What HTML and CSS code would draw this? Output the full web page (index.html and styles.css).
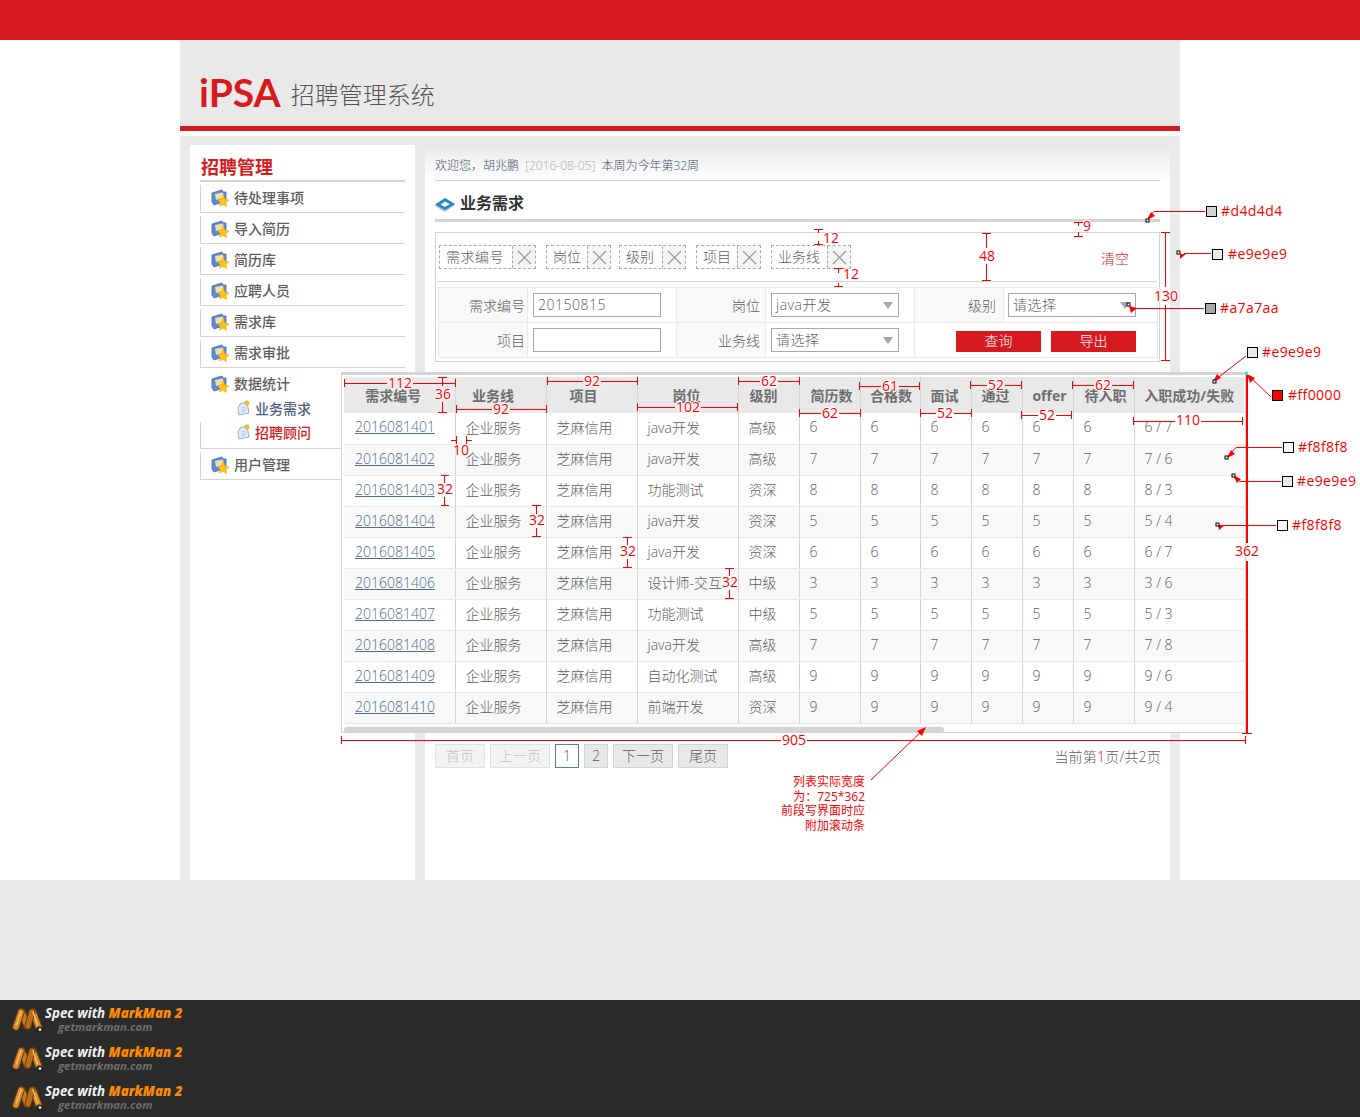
FILE: index.html
```html
<!DOCTYPE html>
<html>
<head>
    <title>iPSA 招聘管理系统</title>
    <link rel="stylesheet" href="styles.css">
</head>
<body>
    <svg class="icon-defs" width="0" height="0">
        <symbol id="ico-folder" viewBox="0 0 18 18">
            <path d="M1 4 L11 1 L12 3 L15 3 L15 12 L3 16 L1 13 Z" fill="#5c8ad6" stroke="#3f68b4" stroke-width=".8"/>
            <path d="M4 5 L12 3.500 L13 9 L5 11 Z" fill="#f2dfa6"/>
            <path d="M12 6 L14 10 L18 11 L15 13.500 L15.500 17.500 L12 15.500 L8.500 17 L9 13 L6.500 10.500 L10.500 10 Z" fill="#fcc419" stroke="#eda80c" stroke-width=".5"/>
        </symbol>
        <symbol id="ico-doc" viewBox="0 0 14 16">
            <path d="M3 4 L10 2 L12 13 L2 15 L1 8 Z" fill="#e6eef8" stroke="#93aed2"/>
            <path d="M4 8 L9 7 M4 10 L10 9 M4 12 L9 11" stroke="#a9c0dc" stroke-width=".8"/>
            <circle cx="10" cy="3" r="2.200" fill="#f4c21c" stroke="#d89a10" stroke-width=".5"/>
        </symbol>
        <symbol id="ico-book" viewBox="0 0 20 14">
            <path d="M0 8 L10 2 L20 7 L10 14 Z" fill="#b9bec4"/>
            <path d="M0 6.500 L10 0 L20 6 L10 12 Z" fill="#1f87c4"/>
            <path d="M5.500 6.500 L10 3.500 L15 6 L10 9 Z" fill="#fff"/>
        </symbol>
        <symbol id="ico-mark" viewBox="0 0 32 26">
            <g fill="none" stroke-linecap="round">
                <path d="M10 4 L15 18" stroke="#6d3d0c" stroke-width="7.500"/>
                <path d="M10 4 L15 18" stroke="#c67a20" stroke-width="5.500"/>
                <path d="M21 4 L27 20" stroke="#6d3d0c" stroke-width="7.500"/>
                <path d="M21 4 L27 20" stroke="#d98b2a" stroke-width="5.500"/>
                <path d="M16 18 L20 4" stroke="#6d3d0c" stroke-width="7"/>
                <path d="M16 18 L20 4" stroke="#b96d18" stroke-width="5"/>
                <path d="M4 19 L9 4" stroke="#6d3d0c" stroke-width="7.500"/>
                <path d="M4 19 L9 4" stroke="#d98b2a" stroke-width="5.500"/>
                <path d="M9 4 L4 18 M21 4 L26 18" stroke="#f3c27a" stroke-width="1.500" stroke-dasharray="1.500 1.500"/>
            </g>
            <circle cx="27.500" cy="22" r="3.600" fill="#222"/>
            <circle cx="28" cy="21.600" r="1.400" fill="#eee"/>
        </symbol>
        <symbol id="ico-x" viewBox="0 0 15 15">
            <path d="M1 1 L14 14 M14 1 L1 14" fill="none" stroke="#999" stroke-width="1.200"/>
        </symbol>
    </svg>

    <div class="topbar"></div>

    <div class="wrap">
        <div class="header">
            <span class="logo">iPSA</span>
            <span class="logo-sub">招聘管理系统</span>
        </div>

        <div class="content">
            <div class="sidebar">
                <h2 class="side-title">招聘管理</h2>
                <ul class="side-menu">
                    <li class="side-item"><svg class="ico"><use href="#ico-folder"/></svg>待处理事项</li>
                    <li class="side-item"><svg class="ico"><use href="#ico-folder"/></svg>导入简历</li>
                    <li class="side-item"><svg class="ico"><use href="#ico-folder"/></svg>简历库</li>
                    <li class="side-item"><svg class="ico"><use href="#ico-folder"/></svg>应聘人员</li>
                    <li class="side-item"><svg class="ico"><use href="#ico-folder"/></svg>需求库</li>
                    <li class="side-item"><svg class="ico"><use href="#ico-folder"/></svg>需求审批</li>
                    <li class="side-item side-open"><svg class="ico"><use href="#ico-folder"/></svg>数据统计</li>
                    <li class="side-sub"><svg class="ico-sm"><use href="#ico-doc"/></svg>业务需求</li>
                    <li class="side-sub side-sub-on"><svg class="ico-sm"><use href="#ico-doc"/></svg>招聘顾问</li>
                    <li class="side-item"><svg class="ico"><use href="#ico-folder"/></svg>用户管理</li>
                </ul>
            </div>

            <div class="main">
                <div class="welcome">欢迎您，胡兆鹏 <span class="welcome-date">[2016-08-05]</span> 本周为今年第32周</div>
                <div class="page-title"><svg class="ico-book"><use href="#ico-book"/></svg>业务需求</div>

                <div class="filter">
                    <div class="chips">
                        <span class="chip"><span class="chip-text">需求编号</span><span class="chip-x"><svg class="x"><use href="#ico-x"/></svg></span></span>
                        <span class="chip"><span class="chip-text">岗位</span><span class="chip-x"><svg class="x"><use href="#ico-x"/></svg></span></span>
                        <span class="chip"><span class="chip-text">级别</span><span class="chip-x"><svg class="x"><use href="#ico-x"/></svg></span></span>
                        <span class="chip"><span class="chip-text">项目</span><span class="chip-x"><svg class="x"><use href="#ico-x"/></svg></span></span>
                        <span class="chip"><span class="chip-text">业务线</span><span class="chip-x"><svg class="x"><use href="#ico-x"/></svg></span></span>
                        <span class="chips-clear">清空</span>
                    </div>
                    <table class="form-table">
                        <tr>
                            <td class="f-label f-l1">需求编号</td>
                            <td class="f-field f-c1"><span class="f-input">20150815</span></td>
                            <td class="f-label f-l2">岗位</td>
                            <td class="f-field f-c2"><span class="f-input f-select">java开发</span></td>
                            <td class="f-label f-l3">级别</td>
                            <td class="f-field f-c3"><span class="f-input f-select">请选择</span></td>
                        </tr>
                        <tr>
                            <td class="f-label">项目</td>
                            <td class="f-field"><span class="f-input"></span></td>
                            <td class="f-label f-l2">业务线</td>
                            <td class="f-field"><span class="f-input f-select">请选择</span></td>
                            <td class="f-actions" colspan="2">
                                <div class="f-btns"><span class="btn">查询</span><span class="btn">导出</span></div>
                            </td>
                        </tr>
                    </table>
                </div>

                <div class="list-panel">
                    <table class="list">
                        <colgroup>
                            <col class="c111"><col class="c91"><col class="c91"><col class="c101"><col class="c61"><col class="c61"><col class="c60"><col class="c51"><col class="c51"><col class="c51"><col class="c61"><col class="c110">
                        </colgroup>
                        <thead>
                            <tr><th>需求编号</th><th>业务线</th><th>项目</th><th>岗位</th><th>级别</th><th>简历数</th><th>合格数</th><th>面试</th><th>通过</th><th>offer</th><th>待入职</th><th>入职成功/失败</th></tr>
                        </thead>
                        <tbody>
                            <tr><td><a href="#">2016081401</a></td><td>企业服务</td><td>芝麻信用</td><td>java开发</td><td>高级</td><td>6</td><td>6</td><td>6</td><td>6</td><td>6</td><td>6</td><td>6 / 7</td></tr>
                            <tr><td><a href="#">2016081402</a></td><td>企业服务</td><td>芝麻信用</td><td>java开发</td><td>高级</td><td>7</td><td>7</td><td>7</td><td>7</td><td>7</td><td>7</td><td>7 / 6</td></tr>
                            <tr><td><a href="#">2016081403</a></td><td>企业服务</td><td>芝麻信用</td><td>功能测试</td><td>资深</td><td>8</td><td>8</td><td>8</td><td>8</td><td>8</td><td>8</td><td>8 / 3</td></tr>
                            <tr><td><a href="#">2016081404</a></td><td>企业服务</td><td>芝麻信用</td><td>java开发</td><td>资深</td><td>5</td><td>5</td><td>5</td><td>5</td><td>5</td><td>5</td><td>5 / 4</td></tr>
                            <tr><td><a href="#">2016081405</a></td><td>企业服务</td><td>芝麻信用</td><td>java开发</td><td>资深</td><td>6</td><td>6</td><td>6</td><td>6</td><td>6</td><td>6</td><td>6 / 7</td></tr>
                            <tr><td><a href="#">2016081406</a></td><td>企业服务</td><td>芝麻信用</td><td>设计师-交互</td><td>中级</td><td>3</td><td>3</td><td>3</td><td>3</td><td>3</td><td>3</td><td>3 / 6</td></tr>
                            <tr><td><a href="#">2016081407</a></td><td>企业服务</td><td>芝麻信用</td><td>功能测试</td><td>中级</td><td>5</td><td>5</td><td>5</td><td>5</td><td>5</td><td>5</td><td>5 / 3</td></tr>
                            <tr><td><a href="#">2016081408</a></td><td>企业服务</td><td>芝麻信用</td><td>java开发</td><td>高级</td><td>7</td><td>7</td><td>7</td><td>7</td><td>7</td><td>7</td><td>7 / 8</td></tr>
                            <tr><td><a href="#">2016081409</a></td><td>企业服务</td><td>芝麻信用</td><td>自动化测试</td><td>高级</td><td>9</td><td>9</td><td>9</td><td>9</td><td>9</td><td>9</td><td>9 / 6</td></tr>
                            <tr><td><a href="#">2016081410</a></td><td>企业服务</td><td>芝麻信用</td><td>前端开发</td><td>资深</td><td>9</td><td>9</td><td>9</td><td>9</td><td>9</td><td>9</td><td>9 / 4</td></tr>
                        </tbody>
                    </table>
                    <div class="hscroll"><div class="hscroll-thumb"></div></div>
                </div>

                <div class="pager">
                    <span class="pg pg-w50 pg-off">首页</span>
                    <span class="pg pg-w60 pg-off">上一页</span>
                    <span class="pg pg-w24 pg-on">1</span>
                    <span class="pg pg-w24">2</span>
                    <span class="pg pg-w60">下一页</span>
                    <span class="pg pg-w50">尾页</span>
                    <span class="pager-info">当前第<em>1</em>页/共2页</span>
                </div>
            </div>
        </div>
    </div>

    <div class="band"></div>

    <div class="footer">
        <div class="mark"><svg class="mark-logo"><use href="#ico-mark"/></svg><div class="mark-text"><div class="mark-line">Spec with <b>MarkMan 2</b></div><div class="mark-url">getmarkman.com</div></div></div>
        <div class="mark"><svg class="mark-logo"><use href="#ico-mark"/></svg><div class="mark-text"><div class="mark-line">Spec with <b>MarkMan 2</b></div><div class="mark-url">getmarkman.com</div></div></div>
        <div class="mark"><svg class="mark-logo"><use href="#ico-mark"/></svg><div class="mark-text"><div class="mark-line">Spec with <b>MarkMan 2</b></div><div class="mark-url">getmarkman.com</div></div></div>
    </div>

    <!-- markman measure layer, sits over the page -->
    <svg class="marks" width="1360" height="1117">
        <!-- widths, the line stops either side of its label -->
        <path class="m-line" d="M344 383H387M413 383H456M344.500 379V387M455.500 379V387
            M456 409H492M510 409H547M456.500 405V413M546.500 405V413
            M547 381H583M601 381H638M547.500 377V385M637.500 377V385
            M637 407H675M701 407H738M637.500 403V411M737.500 403V411
            M738 381H760M778 381H800M738.500 377V385M799.500 377V385
            M799 413H821M839 413H861M799.500 409V417M860.500 409V417
            M859 386H881M899 386H920M859.500 382V390M919.500 382V390
            M920 413H936M954 413H972M920.500 409V417M971.500 409V417
            M970 385H987M1005 385H1022M970.500 381V389M1021.500 381V389
            M1021 415H1038M1056 415H1072M1021.500 411V419M1071.500 411V419
            M1072 385H1094M1112 385H1134M1072.500 381V389M1133.500 381V389
            M1133 421H1175M1201 421H1243M1133.500 417V425M1242.500 417V425
            M341 740H781M807 740H1246M341.500 736V744M1245.500 736V744
            M451 440H457M456.500 436V444M466 440H472M466.500 436V444"/>
        <!-- heights -->
        <path class="m-line" d="M442.500 377V386M442.500 402V413M438 377.500H447M438 412.500H447
            M444.500 475V483M444.500 497V506M441 475.500H449M441 505.500H449
            M536.500 505V514M536.500 528V537M532 505.500H541M532 536.500H541
            M627.500 537V545M627.500 559V568M623 537.500H632M623 567.500H632
            M729.500 568V576M729.500 590V599M725 568.500H734M725 598.500H734
            M818.500 229V233M818.500 241V245M814 229.500H823M814 244.500H823
            M838.500 269V273M838.500 283V287M834 268.500H843M834 286.500H843
            M986.500 233V248M986.500 264V281M982 233.500H991M982 280.500H991
            M1078.500 222V226M1078.500 232V236M1074 222.500H1083M1074 236.500H1083
            M1165.500 233V287M1165.500 305V361M1161 232.500H1170M1161 360.500H1170"/>
        <path class="m-line m-thick" d="M1247 373V543M1247 561V733"/>
        <path class="m-line" d="M1242 733.500H1252"/>

        <text class="m-num" x="400" y="388">112</text>
        <text class="m-num" x="501" y="414">92</text>
        <text class="m-num" x="592" y="386">92</text>
        <text class="m-num" x="688" y="412">102</text>
        <text class="m-num" x="769" y="386">62</text>
        <text class="m-num" x="830" y="418">62</text>
        <text class="m-num" x="890" y="391">61</text>
        <text class="m-num" x="945" y="418">52</text>
        <text class="m-num" x="996" y="390">52</text>
        <text class="m-num" x="1047" y="420">52</text>
        <text class="m-num" x="1103" y="390">62</text>
        <text class="m-num" x="1188" y="425">110</text>
        <text class="m-num" x="794" y="745">905</text>
        <text class="m-num" x="461" y="455">10</text>
        <text class="m-num" x="443" y="399">36</text>
        <text class="m-num" x="445" y="494">32</text>
        <text class="m-num" x="537" y="525">32</text>
        <text class="m-num" x="628" y="556">32</text>
        <text class="m-num" x="730" y="587">32</text>
        <text class="m-num" x="831" y="243">12</text>
        <text class="m-num" x="851" y="279">12</text>
        <text class="m-num" x="987" y="261">48</text>
        <text class="m-num" x="1087" y="231">9</text>
        <text class="m-num" x="1166" y="301">130</text>
        <text class="m-num" x="1247" y="556">362</text>

        <!-- colour pickers -->
        <path class="m-thin" d="M1205 211.500H1154L1148 218"/>
        <path class="m-thin" d="M1211 253.500H1184"/>
        <path class="m-thin" d="M1204 308.500H1134"/>
        <path class="m-thin" d="M1246 356L1215 380"/>
        <path class="m-thin" d="M1271 397L1249 376"/>
        <path class="m-thin" d="M1282 447.500H1236L1228 456"/>
        <path class="m-thin" d="M1281 481.500H1240L1235 477"/>
        <path class="m-thin" d="M1276 525.500H1221"/>
        <path class="m-thin" d="M871 780L924 729"/>
        <path class="m-head" d="M1147 220L1155 216L1151 212Z"/>
        <path class="m-head" d="M1180 254L1186 254L1180 259Z"/>
        <path class="m-head" d="M1129 306L1137 308L1131 313Z"/>
        <path class="m-head" d="M1213 382L1221 378L1217 374Z"/>
        <path class="m-head" d="M1247 374L1255 378L1250 383Z"/>
        <path class="m-head" d="M1227 458L1235 454L1231 450Z"/>
        <path class="m-head" d="M1233 475L1241 479L1237 483Z"/>
        <path class="m-head" d="M1218 525L1225 525L1219 530Z"/>
        <path class="m-head" d="M926 727L917 731L922 736Z"/>

        <rect class="m-dot" x="1146" y="219" width="3" height="3"/>
        <rect class="m-dot" x="1177" y="251" width="3" height="3"/>
        <rect class="m-dot" x="1127" y="303" width="3" height="3"/>
        <rect class="m-dot" x="1213" y="380" width="3" height="3"/>
        <rect class="m-dot" x="1225" y="456" width="3" height="3"/>
        <rect class="m-dot" x="1232" y="474" width="3" height="3"/>
        <rect class="m-dot" x="1216" y="523" width="3" height="3"/>
        <rect class="m-cyan" x="1245" y="372" width="3" height="3"/>

        <rect class="m-swatch s-d4" x="1206.500" y="206.500" width="10" height="10"/>
        <rect class="m-swatch s-e9" x="1212.500" y="249.500" width="10" height="10"/>
        <rect class="m-swatch s-a7" x="1205.500" y="303.500" width="10" height="10"/>
        <rect class="m-swatch s-e9" x="1247.500" y="347.500" width="10" height="10"/>
        <rect class="m-swatch s-f0" x="1272.500" y="390.500" width="10" height="10"/>
        <rect class="m-swatch s-f8" x="1283.500" y="442.500" width="10" height="10"/>
        <rect class="m-swatch s-e9" x="1282.500" y="476.500" width="10" height="10"/>
        <rect class="m-swatch s-f8" x="1277.500" y="520.500" width="10" height="10"/>

        <text class="m-color" x="1221" y="216">#d4d4d4</text>
        <text class="m-color" x="1228" y="259">#e9e9e9</text>
        <text class="m-color" x="1220" y="313">#a7a7aa</text>
        <text class="m-color" x="1262" y="357">#e9e9e9</text>
        <text class="m-color" x="1288" y="400">#ff0000</text>
        <text class="m-color" x="1298" y="452">#f8f8f8</text>
        <text class="m-color" x="1297" y="486">#e9e9e9</text>
        <text class="m-color" x="1292" y="530">#f8f8f8</text>

        <text class="m-note" x="865" y="786">列表实际宽度</text>
        <text class="m-note" x="865" y="801">为：725*362</text>
        <text class="m-note" x="865" y="815">前段写界面时应</text>
        <text class="m-note" x="865" y="830">附加滚动条</text>
    </svg>
</body>
</html>
```

FILE: styles.css
```css
* {
    box-sizing: border-box;
}
body {
    margin: 0;
    position: relative;
    background: #fff;
    font-family: "Open Sans", "Noto Sans CJK SC", sans-serif;
    font-size: 14px;
    font-weight: 300;
    color: #5e5e5e;
}
ul {
    margin: 0;
    padding: 0;
    list-style: none;
}
.icon-defs {
    position: absolute;
}
.topbar {
    height: 40px;
    background: #d71920;
}
.wrap {
    width: 1000px;
    height: 840px;
    margin: 0 auto;
    background: #e9e9e9;
    display: flex;
    flex-direction: column;
}

/* header */
.header {
    height: 91px;
    flex: none;
    padding: 27px 0 0 19px;
    border-bottom: 5px solid #d71920;
    box-shadow: 0 5px 0 #fff;
    display: flex;
    align-items: flex-start;
}
.logo {
    font-family: Lato, sans-serif;
    font-weight: bold;
    font-size: 39px;
    line-height: 50px;
    color: #d71920;
    margin-right: 10px;
}
.logo-sub {
    margin-top: 12px;
    font-size: 24px;
    line-height: 32px;
    color: #555;
}
.content {
    flex: 1;
    min-height: 0;
    display: flex;
    gap: 10px;
    padding: 9px 10px 0;
    margin-top: 5px;
}

/* left menu */
.sidebar {
    width: 225px;
    flex: none;
    background: #fff;
    padding: 0 10px;
}
.side-title {
    margin: 0;
    height: 37px;
    padding: 10px 0 0 1px;
    font-size: 18px;
    line-height: 24px;
    color: #d71920;
    border-bottom: 2px solid #d4d4d4;
}
.side-menu {
    font-weight: 500;
}
.side-item {
    height: 28px;
    margin-top: 3px;
    padding: 0 0 2px 10px;
    border-left: 1px solid #d4d4d4;
    border-bottom: 1px solid #d4d4d4;
    display: flex;
    align-items: center;
    line-height: 26px;
}
.side-open {
    border-color: transparent;
}
.ico {
    width: 18px;
    height: 18px;
    margin-right: 5px;
    flex: none;
}
.side-sub {
    height: 23px;
    padding: 0 0 5px 37px;
    display: flex;
    align-items: center;
    color: #4f5d7f;
}
.side-sub-on {
    height: 27px;
    padding: 0 0 6px 36px;
    color: #d71920;
    border-left: 1px solid #d4d4d4;
    border-bottom: 1px solid #d4d4d4;
}
.ico-sm {
    width: 14px;
    height: 16px;
    margin-right: 4px;
    flex: none;
}

/* right side */
.main {
    width: 745px;
    flex: none;
    padding: 0 10px;
    background: #fff linear-gradient(#e9e9e9, #fff 36px) no-repeat;
}
.welcome {
    height: 36px;
    padding-top: 13px;
    font-size: 12px;
    line-height: 16px;
    color: #3d5266;
    border-bottom: 1px solid #d4d4d4;
}
.welcome-date {
    margin: 0 3px;
    color: #aaa;
}
.page-title {
    height: 41px;
    padding-top: 10px;
    font-size: 16px;
    line-height: 24px;
    font-weight: bold;
    color: #333;
    border-bottom: 3px solid #d4d4d4;
    display: flex;
    align-items: flex-start;
}
.ico-book {
    width: 20px;
    height: 14px;
    margin: 7px 5px 0 0;
}
.filter {
    height: 130px;
    margin-top: 10px;
    padding: 12px 2px 0;
    border: 1px solid #d4d4d4;
}
.chips {
    height: 37px;
    padding-left: 1px;
    border-bottom: 1px solid #d4d4d4;
    display: flex;
    align-items: flex-start;
    gap: 10px;
}
.chip {
    height: 24px;
    display: flex;
    border: 1px dashed #aaa;
    line-height: 22px;
}
.chip:nth-child(3) {
    margin-left: -2px;
}
.chip-text {
    padding: 0 6px;
}
.chip:nth-child(1) .chip-text {
    padding-right: 8px;
    letter-spacing: .5px;
}
.chip:nth-child(3) .chip-text {
    padding-right: 8px;
}
.chip:nth-child(5) .chip-text {
    padding-right: 7px;
}
.chip-x {
    width: 23px;
    background: #f4f4f4;
    border-left: 1px dashed #aaa;
    display: flex;
    align-items: center;
    justify-content: center;
}
.x {
    width: 15px;
    height: 15px;
}
.chips-clear {
    margin: 3px 28px 0 auto;
    color: #d71920;
    line-height: 22px;
}
.form-table {
    width: 719px;
    margin-top: 5px;
    border-collapse: collapse;
    table-layout: fixed;
}
.form-table td {
    height: 35px;
    border: 1px solid #e9e9e9;
    padding: 0;
}
.f-l1 { width: 89px; }
.f-c1 { width: 149px; }
.f-l2 { width: 89px; }
.f-c2 { width: 149px; }
.f-l3 { width: 89px; }
.f-c3 { width: 154px; }
.form-table .f-label {
    background: #f8f8f8;
    text-align: right;
    padding-right: 2px;
}
.form-table .f-l2 {
    padding-right: 5px;
}
.form-table .f-l3 {
    padding-right: 7px;
}
.form-table .f-field {
    padding-left: 5px;
}
.form-table .f-c3 {
    padding-left: 4px;
}
.f-input {
    display: block;
    position: relative;
    width: 128px;
    height: 24px;
    border: 1px solid #a7a7aa;
    padding-left: 4px;
    line-height: 22px;
    letter-spacing: .5px;
}
.f-select::after {
    content: "";
    position: absolute;
    right: 5px;
    top: 8px;
    border: 5px solid transparent;
    border-top: 7px solid #a7a7aa;
    border-bottom: 0;
}
.f-actions {
    background: #fff;
}
.f-btns {
    display: flex;
    justify-content: flex-end;
    gap: 10px;
    padding: 2px 21px 0 0;
}
.btn {
    width: 85px;
    height: 21px;
    background: #d71920;
    color: #fff;
    text-align: center;
    line-height: 20px;
}

/* list, wider than the page column */
.list-panel {
    width: 905px;
    height: 361px;
    margin: 10px 0 0 -94px;
    padding: 2px 2px 0;
    background: #fff;
    border: 1px solid #d4d4d4;
    border-top-width: 3px;
}
.list {
    width: 900px;
    border-collapse: collapse;
    table-layout: fixed;
}
.c111 { width: 111px; }
.c110 { width: 110px; }
.c101 { width: 101px; }
.c91 { width: 91px; }
.c61 { width: 61px; }
.c60 { width: 60px; }
.c51 { width: 51px; }
.list th {
    height: 36px;
    padding: 0;
    background: #e9e9e9;
    border-right: 1px solid #d4d4d4;
    font-weight: bold;
    color: #6e6e6e;
    text-align: center;
}
/* header labels are not quite centred in the design */
.list th:nth-child(1) { padding-right: 12px; }
.list th:nth-child(2) { padding-right: 15px; }
.list th:nth-child(3) { padding-right: 16px; }
.list th:nth-child(4) { padding-right: 2px; }
.list th:nth-child(5) { padding-right: 10px; }
.list th:nth-child(6) { padding-left: 4px; }
.list th:nth-child(7) { padding-left: 2px; }
.list th:nth-child(8) { padding-right: 2px; }
.list th:nth-child(9) { padding-right: 2px; }
.list th:nth-child(10) { padding-left: 4px; }
.list th:nth-child(11) { padding-left: 4px; }
.list td {
    height: 31px;
    padding: 0 0 3px 10px;
    border-right: 1px solid #d4d4d4;
    border-bottom: 1px solid #e9e9e9;
    white-space: nowrap;
}
.list td:first-child {
    padding-left: 11px;
}
.list th:last-child,
.list td:last-child {
    border-right: 0;
}
.list tbody tr:nth-child(even) td {
    background: #f8f8f8;
}
.list a {
    color: #4f6c92;
}
.hscroll {
    margin-top: 3px;
}
.hscroll-thumb {
    width: 600px;
    height: 6px;
    border-radius: 3px;
    background: #d4d4d4;
}

/* pager */
.pager {
    margin-top: 11px;
    display: flex;
    align-items: center;
    gap: 5px;
}
.pg {
    height: 24px;
    background: #e9e9e9;
    border: 1px solid #d4d4d4;
    text-align: center;
    line-height: 22px;
}
.pg-w24 { width: 24px; }
.pg-w50 { width: 50px; }
.pg-w60 { width: 60px; }
.pg-off {
    background: #f2f2f2;
    border-color: #e0e0e0;
    color: #c4c4c4;
}
.pg-on {
    background: #fff;
    border-color: #5f7a9c;
}
.pager-info {
    margin-left: auto;
    margin-right: -1px;
    letter-spacing: .2px;
}
.pager-info em {
    font-style: normal;
    color: #d71920;
}

.band {
    height: 120px;
    background: #e9e9e9;
}
.footer {
    height: 117px;
    overflow: hidden;
    background: #2b2b2b;
    padding: 6px 0 0 12px;
}
.mark {
    height: 39px;
    display: flex;
    gap: 1px;
}
.mark-logo {
    width: 32px;
    height: 26px;
    margin-top: 2px;
}
.mark-text {
    font-family: "Open Sans", sans-serif;
    font-style: italic;
    font-weight: bold;
}
.mark-line {
    font-size: 13.300px;
    line-height: 15px;
    color: #f2f2f2;
}
.mark-line b {
    color: #ff8c00;
}
.mark-url {
    margin-left: 13px;
    font-size: 11.300px;
    line-height: 12px;
    color: #6d6d6d;
}

/* measure layer */
.marks {
    position: absolute;
    top: 0;
    left: 0;
    pointer-events: none;
}
.m-line {
    fill: none;
    stroke: #f00;
    stroke-width: 1;
    shape-rendering: crispEdges;
}
.m-thick {
    stroke-width: 2;
}
.m-thin {
    fill: none;
    stroke: #f00;
    stroke-width: 1;
}
.m-head {
    fill: #f00;
}
.m-num {
    font-size: 14px;
    font-weight: 400;
    fill: #f00;
    text-anchor: middle;
    paint-order: stroke;
    stroke: #fff;
    stroke-width: 2px;
}
.m-color {
    font-size: 14px;
    font-weight: 400;
    letter-spacing: .4px;
    fill: #f00;
}
.m-note {
    font-size: 12px;
    font-weight: 400;
    fill: #f00;
    text-anchor: end;
}
.m-dot {
    fill: #fff;
    stroke: #000;
    stroke-width: 1;
}
.m-cyan {
    fill: #0ff;
}
.m-swatch {
    stroke: #000;
    stroke-width: 1;
    shape-rendering: crispEdges;
}
.s-d4 { fill: #d4d4d4; }
.s-e9 { fill: #e9e9e9; }
.s-a7 { fill: #a7a7aa; }
.s-f0 { fill: #f00; }
.s-f8 { fill: #f8f8f8; }
```
